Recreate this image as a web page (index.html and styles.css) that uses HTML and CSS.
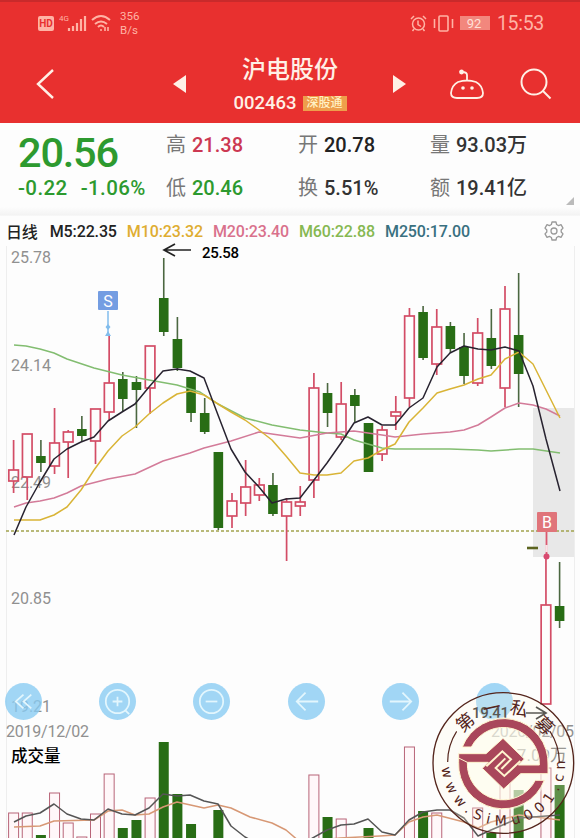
FILE: index.html
```
<!DOCTYPE html>
<html lang="zh-CN">
<head>
    <meta charset="UTF-8">
    <meta name="viewport" content="width=device-width, initial-scale=1.0">
    <title>沪电股份 002463</title>
    <link rel="stylesheet" href="styles.css">
</head>
<body>
    <header class="header">
        <div class="status-bar">
            <div class="status-left">
                <span class="hd">HD</span>
                <svg class="signal" width="29" height="20" viewBox="0 0 29 20">
                    <text x="0" y="8" font-size="8">4G</text>
                    <path d="M10 18v-3M14 18v-5M18 18v-8M22 18v-12M26 18v-15" stroke="currentColor" stroke-width="2.2"/>
                </svg>
                <svg width="20" height="18" viewBox="0 0 20 18" fill="none" stroke="currentColor" stroke-width="2">
                    <path d="M1 6q9-8 18 0M4 10q6-5 12 0M7 13q3-3 6 0"/>
                    <path d="M9 16h2M14 13v4M17 13v4" stroke-width="1.6"/>
                </svg>
                <span class="speed">356<br>B/s</span>
            </div>
            <div class="status-right">
                <svg width="17" height="17" viewBox="0 0 17 17" fill="none" stroke="currentColor" stroke-width="1.5">
                    <circle cx="8.5" cy="9" r="6"/><path d="M8 5.5v4l3 2M1 4l3-3M13 1l3 3M4 14l-1.500 2M13 14l1.500 2"/>
                </svg>
                <svg width="21" height="17" viewBox="0 0 21 17" fill="none" stroke="currentColor" stroke-width="1.6">
                    <rect x="6" y="1" width="9" height="15" rx="1"/><path d="M1.500 4v9M19.500 4v9"/>
                </svg>
                <span class="battery">92</span>
                <span class="clock">15:53</span>
            </div>
        </div>
        <nav class="nav">
            <svg class="back" width="20" height="32" viewBox="0 0 20 32" fill="none" stroke="currentColor" stroke-width="2.4">
                <path d="M18 2L3 16l15 14"/>
            </svg>
            <svg class="prev" width="13" height="18" viewBox="0 0 13 18"><path d="M0 9L13 0v18z" fill="currentColor"/></svg>
            <div class="title">
                <h1>沪电股份</h1>
                <div class="code">002463 <span class="tag">深股通</span></div>
            </div>
            <svg class="next" width="13" height="18" viewBox="0 0 13 18"><path d="M13 9L0 0v18z" fill="currentColor"/></svg>
            <svg class="robot" width="36" height="32" viewBox="0 0 36 32" fill="none" stroke="currentColor" stroke-width="1.8">
                <path d="M9 13Q18 10 27 13Q33 16 34 24Q34 29 28 29H8Q2 29 2 24Q3 16 9 13ZM18 11V6Q18 3 13 3"/>
                <circle cx="12.500" cy="3" r="1.500" fill="currentColor"/>
                <g fill="currentColor" stroke="none"><circle cx="14" cy="19" r="1.800"/><circle cx="23" cy="19" r="1.800"/></g>
            </svg>
            <svg class="search" width="32" height="32" viewBox="0 0 32 32" fill="none" stroke="currentColor" stroke-width="2">
                <circle cx="14" cy="14" r="12.500"/><path d="M22.500 22.500l8 8"/>
            </svg>
        </nav>
    </header>

    <section class="quote">
        <div class="price down">20.56</div>
        <div class="item"><label>高</label><span class="up">21.38</span></div>
        <div class="item"><label>开</label><span>20.78</span></div>
        <div class="item"><label>量</label><span class="dim">93.03万</span></div>
        <div class="change down"><span>-0.22</span><span>-1.06%</span></div>
        <div class="item"><label>低</label><span class="down">20.46</span></div>
        <div class="item"><label>换</label><span class="dim">5.51%</span></div>
        <div class="item"><label>额</label><span class="dim">19.41亿</span></div>
    </section>

    <main class="chart-area">
        <div class="legend">
            <span class="period">日线</span>
            <span class="m5">M5:22.35</span>
            <span class="m10">M10:23.32</span>
            <span class="m20">M20:23.40</span>
            <span class="m60">M60:22.88</span>
            <span class="m250">M250:17.00</span>
            <svg class="gear" width="20" height="20" viewBox="0 0 20 20" fill="none" stroke="currentColor" stroke-width="1.300" stroke-linejoin="round">
                <path d="M8 1h4l.6 2.500 2 1.100L17 3.700l2 3.400L17.200 9v2l1.800 1.900-2 3.400-2.400-.9-2 1.100L12 19H8l-.6-2.500-2-1.100-2.400.9-2-3.400L2.800 11V9L1 7.100l2-3.400 2.400.9 2-1.100z"/>
                <circle cx="10" cy="10" r="3"/>
            </svg>
        </div>

        <svg class="chart" width="580" height="598" viewBox="0 240 580 598">
            <path class="frame" d="M6.500 246V838M574.500 246V838"/>
            <rect class="gap" x="533" y="408" width="41" height="149"/>
            <g class="axis">
                <text x="11" y="263" textLength="40">25.78</text>
                <text x="11" y="371" textLength="40">24.14</text>
                <text x="11" y="488" textLength="40">22.49</text>
                <text x="11" y="604" textLength="40">20.85</text>
                <text x="11" y="712" textLength="40">19.21</text>
                <text x="6" y="737" textLength="83">2019/12/02</text>
                <text x="491" y="737" textLength="83">2020/02/05</text>
            </g>
            <text class="vol-title" x="11" y="762">成交量</text>
            <text class="vol-max" x="567" y="761" text-anchor="end">97.09万</text>
            <path class="cost" d="M6 531H574"/>
            <g id="volumes"></g>
            <g id="candles"></g>
            <g id="lines"></g>

            <path class="arrow" d="M191 250H164M175 244L164 250L175 256"/>
            <text class="peak" x="202" y="258" textLength="37">25.58</text>

            <path d="M108 311V334" stroke="#82bdec" stroke-width="1.500"/>
            <path d="M108 324l2.500 3-2.500 3-2.500-3zM108 331l3 5h-6z" fill="#82bdec"/>
            <rect x="98" y="291" width="20" height="19" rx="1" fill="#749de2"/>
            <text class="mark" x="108" y="306.500">S</text>
            <path d="M546.500 530V558" stroke="#dc5870" stroke-width="1.800"/>
            <path d="M546.500 545V552" stroke="#f8e3e7" stroke-width="2.500"/>
            <circle cx="546.500" cy="556.500" r="3" fill="#d84a70"/>
            <rect x="537" y="512" width="20" height="20" rx="1" fill="#e0747a"/>
            <text class="mark" x="547" y="527.500">B</text>
            <path d="M527 548H538" stroke="#5c6420" stroke-width="2.600"/>
        </svg>

        <div class="controls">
            <button><svg viewBox="0 0 38 38"><path d="M19 12l-8 7 8 7M27 12l-8 7 8 7"/></svg></button>
            <button><svg viewBox="0 0 38 38"><circle cx="19" cy="19" r="12"/><path d="M19 14v10M14 19h10M27 28l4 4"/></svg></button>
            <button><svg viewBox="0 0 38 38"><circle cx="19" cy="19" r="12"/><path d="M13 19h12"/></svg></button>
            <button><svg viewBox="0 0 38 38"><path d="M31 19H10M18 10l-9 9 9 9"/></svg></button>
            <button><svg viewBox="0 0 38 38"><path d="M8 19h21M21 10l9 9-9 9"/></svg></button>
            <button><svg viewBox="0 0 38 38"></svg></button>
        </div>

        <svg class="low-label" width="80" height="20" viewBox="470 703 80 20">
            <text class="peak" x="472" y="718" textLength="37">19.41</text>
            <path class="arrow" d="M526 713H546M536 707L546 713L536 719"/>
        </svg>

        <svg class="emblem" width="146" height="148" viewBox="0 0 438 444">
            <defs><path id="site" d="M35 227A185 185 0 0 0 405 227L405 180"/></defs>
            <circle cx="220" cy="225" r="211" fill="#fffbe6" fill-opacity=".25" stroke="#54251c" stroke-width="4"/>
            <circle cx="220" cy="227" r="139" fill="#fffdec" fill-opacity=".55"/>
            <path d="M53 222A170 170 0 0 1 80 130M360 130A170 170 0 0 1 388 222" fill="none" stroke="#54251c" stroke-width="3.500"/>
            <g class="ring-cn">
                <text transform="translate(106 103) rotate(-40)">第</text>
                <text transform="translate(185 60) rotate(-12)">一</text>
                <text transform="translate(268 62) rotate(14)">私</text>
                <text transform="translate(344 113) rotate(44)">募</text>
            </g>
            <text class="ring-url"><textPath href="#site" startOffset="12">www.SiMu001.cn</textPath></text>
            <g fill="#a9475b" stroke="#fff5cf" stroke-width="3">
                <path d="M97 177A133 133 0 0 1 354 231V257H272L221 303L157 241L175 223H86V197H168L219 151L283 213L265 231H328A108 108 0 0 0 124 177Z"/>
                <path d="M343 277A133 133 0 0 1 86 223V210L112 223A108 108 0 0 0 316 277Z"/>
            </g>
            <path d="M169 235L217 190L243 214L214 243M271 219L223 264L197 240L226 211" fill="none" stroke="#fff5cf" stroke-width="6"/>
        </svg>
    </main>

    <script>
        // [slot, color, high, body top, body bottom, low]
        const candles = [
            [0, 'r', 440, 470, 481, 493], [1, 'r', 434, 434, 477, 500], [2, 'g', 440, 456, 463, 472],
            [3, 'r', 408, 443, 466, 474], [4, 'r', 430, 432, 442, 478], [5, 'g', 416, 429, 436, 441],
            [6, 'r', 409, 409, 441, 464], [7, 'r', 336, 383, 412, 420], [8, 'g', 372, 379, 399, 411],
            [9, 'g', 376, 382, 390, 428], [10, 'r', 346, 346, 388, 414], [11, 'g', 258, 298, 332, 336],
            [12, 'g', 317, 339, 368, 371], [13, 'g', 377, 377, 413, 422], [14, 'g', 398, 413, 432, 434],
            [15, 'g', 452, 452, 528, 530], [16, 'r', 493, 501, 516, 528], [17, 'r', 460, 487, 503, 516],
            [18, 'r', 478, 485, 495, 501], [19, 'g', 473, 485, 514, 516], [20, 'r', 498, 502, 516, 561],
            [21, 'r', 486, 502, 506, 516], [22, 'r', 373, 388, 480, 498], [23, 'g', 383, 393, 413, 427],
            [24, 'r', 382, 404, 437, 440], [25, 'g', 389, 395, 406, 422], [26, 'g', 423, 423, 472, 472],
            [27, 'r', 426, 430, 454, 461], [28, 'r', 396, 412, 416, 430], [29, 'r', 308, 316, 398, 407],
            [30, 'g', 306, 312, 358, 360], [31, 'r', 309, 327, 364, 375], [32, 'g', 322, 326, 349, 353],
            [33, 'g', 333, 347, 376, 384], [34, 'r', 318, 333, 383, 386], [35, 'g', 309, 338, 366, 369],
            [36, 'r', 286, 309, 388, 407], [37, 'g', 273, 335, 374, 407], [39, 'r', 557, 605, 704, 704],
            [40, 'g', 562, 606, 621, 628]
        ];
        // [slot, color, bar top]
        const volumes = [
            [0, 'r', 813], [1, 'r', 813], [2, 'g', 835], [3, 'r', 793], [4, 'r', 823], [5, 'r', 837],
            [6, 'r', 814], [7, 'r', 774], [8, 'g', 828], [9, 'g', 820], [10, 'r', 798], [11, 'g', 742],
            [12, 'g', 794], [13, 'g', 824], [15, 'g', 810], [22, 'r', 775], [23, 'g', 817], [24, 'r', 819],
            [26, 'g', 828], [29, 'r', 747], [30, 'g', 811], [31, 'r', 813], [34, 'r', 808], [35, 'g', 833],
            [36, 'r', 766], [37, 'g', 790], [39, 'r', 768], [40, 'g', 785]
        ];
        const lines = {
            m60: [14,345, 26,346, 40,349, 54,353, 67,359, 94,368, 122,375, 149,380, 177,385, 200,392, 218,404, 245,418, 272,425, 300,430, 327,433, 341,434, 354,440, 368,444, 382,448, 395,449, 450,449, 478,450, 491,451, 519,449, 533,449, 560,453],
            m20: [14,507, 26,503, 40,501, 54,498, 67,493, 81,486, 108,479, 135,474, 163,461, 190,453, 204,448, 231,441, 259,432, 272,434, 300,438, 327,433, 354,431, 382,435, 395,437, 423,434, 450,432, 464,430, 478,425, 491,417, 505,408, 519,403, 533,405, 546,409, 560,416],
            m10: [14,520, 40,520, 54,515, 67,507, 81,490, 94,470, 108,451, 122,436, 135,427, 149,414, 163,403, 177,394, 190,391, 204,395, 218,404, 231,412, 245,420, 259,430, 272,440, 286,456, 300,473, 314,475, 327,475, 341,473, 354,461, 368,458, 382,450, 395,444, 409,422, 423,408, 437,393, 450,389, 464,385, 478,379, 491,375, 505,359, 519,352, 533,364, 546,390, 560,418],
            m5: [14,535, 26,507, 40,482, 54,459, 67,449, 81,442, 94,437, 108,421, 122,412, 135,404, 149,387, 163,371, 177,369, 190,371, 204,378, 218,415, 231,449, 245,472, 259,487, 272,503, 286,499, 300,498, 314,480, 327,463, 341,443, 354,423, 368,417, 382,425, 395,425, 409,408, 423,398, 437,367, 450,353, 464,346, 478,349, 491,350, 505,347, 519,351, 533,386, 546,439, 560,491],
            v10: [14,827, 40,826, 54,821, 94,820, 108,811, 122,810, 135,815, 149,814, 163,807, 177,802, 204,808, 218,805, 231,808, 250,817, 272,823, 286,830, 300,842, 340,838, 380,836, 395,835, 409,822, 423,817, 437,815, 464,822, 478,828, 491,822, 519,815, 560,820],
            v5: [14,822, 26,816, 40,813, 54,804, 67,814, 81,819, 94,820, 108,809, 122,814, 135,815, 149,808, 163,794, 177,796, 190,795, 204,801, 218,804, 231,826, 245,837, 260,845, 300,845, 327,830, 341,825, 354,824, 368,819, 382,832, 395,835, 409,820, 423,812, 437,810, 450,810, 464,818, 478,836, 491,830, 505,824, 519,818, 560,815]
        };

        const slotX = i => 13.6 + i * 13.65;

        document.getElementById('candles').innerHTML = candles.map(([i, color, high, top, bottom, low]) => {
            const x = slotX(i);
            return `<g class="candle-${color}">
                <path d="M${x} ${high}V${top}M${x} ${bottom}V${low}"/>
                <rect x="${x - 4.8}" y="${top}" width="9.600" height="${bottom - top}"/>
            </g>`;
        }).join('');

        document.getElementById('volumes').innerHTML = volumes.map(([i, color, top]) =>
            `<rect class="vol-${color}" x="${slotX(i) - 5}" y="${top}" width="10" height="${845 - top}"/>`
        ).join('');

        document.getElementById('lines').innerHTML = Object.keys(lines).map(name =>
            `<polyline class="line-${name}" points="${lines[name].join(' ')}"/>`
        ).join('');
    </script>
</body>
</html>
```
FILE: styles.css
```
body {
    margin: 0;
    width: 580px;
    height: 838px;
    overflow: hidden;
    background-color: #fdfdfd;
    font-family: Roboto, "Noto Sans CJK SC", sans-serif;
    color: #222;
}
.header {
    height: 123px;
    box-sizing: border-box;
    border-top: 2px solid #c92a2b;
    background-color: #e8302f;
    color: #fff0e6;
}
.status-bar {
    display: flex;
    justify-content: space-between;
    height: 42px;
    padding: 0 36px 0 38px;
    color: #ffb3a5;
}
.status-left, .status-right {
    display: flex;
    align-items: center;
}
.hd {
    width: 16px;
    height: 15px;
    border-radius: 2px;
    background-color: #ffb3a5;
    color: #e8302f;
    font-size: 10px;
    font-weight: bold;
    line-height: 15px;
    text-align: center;
}
.signal {
    margin: 0 3px 0 5px;
    fill: currentColor;
}
.speed {
    margin-left: 9px;
    font-size: 11.5px;
    line-height: 14px;
}
.status-right svg {
    margin-right: 6px;
}
.battery {
    width: 28px;
    height: 14px;
    margin-right: 7px;
    border-right: 2px solid #f2877d;
    background-color: #f2877d;
    background-clip: content-box;
    color: #ffe0d8;
    font-size: 13px;
    line-height: 15px;
    text-align: center;
}
.clock {
    font-size: 19.5px;
    letter-spacing: -0.3px;
}
.nav {
    display: flex;
    align-items: center;
    height: 79px;
}
.back {
    margin-left: 35px;
}
.prev {
    margin-left: 118px;
}
.title {
    width: 132px;
    margin: 5px 37px 0 38px;
    text-align: center;
}
.title h1 {
    margin: 0;
    font-size: 24px;
    font-weight: 500;
    line-height: 34px;
    white-space: nowrap;
}
.code {
    display: flex;
    justify-content: center;
    align-items: center;
    gap: 6px;
    font-size: 18.5px;
    font-weight: 500;
    line-height: 32px;
}
.tag {
    width: 44px;
    height: 15px;
    background-color: #ee9e4b;
    color: #fff1c4;
    font-size: 12px;
    line-height: 15px;
}
.robot {
    margin: 3px 0 0 43px;
}
.search {
    margin-left: 35px;
}
.quote {
    position: relative;
    display: grid;
    grid-template-columns: 148px 132px 132px 1fr;
    grid-template-rows: 43px 44px;
    align-items: center;
    height: 93px;
    box-sizing: border-box;
    padding-left: 18px;
    background: linear-gradient(#fdfdfd 84px, #f3f3f3 92px, #fafafa 93px);
}
/* expand handle in the corner */
.quote::after {
    content: "";
    position: absolute;
    right: 6px;
    bottom: 11px;
    border-left: 8px solid transparent;
    border-bottom: 8px solid #bbb;
}
.price {
    padding-top: 17px;
    font-size: 41.5px;
    font-weight: 500;
    letter-spacing: -1.2px;
    line-height: 44px;
}
.change {
    display: flex;
    gap: 13px;
    font-size: 20.5px;
    font-weight: 500;
    letter-spacing: 0.4px;
    white-space: nowrap;
}
.item {
    display: flex;
    align-items: center;
    gap: 6px;
    font-size: 20px;
    font-weight: 500;
    line-height: 28px;
    white-space: nowrap;
}
.item label {
    color: #777;
    font-weight: 400;
}
.down {
    color: #2d9a2f;
}
.up {
    color: #cc3852;
}
.dim {
    color: #333;
}
.chart-area {
    position: relative;
}
.legend {
    display: flex;
    align-items: center;
    height: 30px;
    padding: 0 16px 0 6px;
    font-size: 16px;
    font-weight: 500;
    letter-spacing: -0.13px;
    white-space: nowrap;
}
.legend span {
    margin-right: 10px;
}
.legend .period {
    margin-right: 12px;
}
.legend .m5 {
    color: #222;
}
.legend .m10 {
    color: #dfad31;
}
.legend .m20 {
    color: #d9718c;
}
.legend .m60 {
    color: #86b851;
}
.legend .m250 {
    color: #397080;
}
.gear {
    margin-left: auto;
    color: #999;
}
.chart {
    display: block;
    margin-top: -6px;
}
.frame {
    stroke: #eee;
    fill: none;
}
.gap {
    fill: #e8e8e8;
}
.axis {
    fill: #909090;
    font-size: 16px;
}
.vol-title {
    font-size: 16.5px;
    font-weight: 500;
}
.vol-max {
    fill: #777;
    font-size: 17px;
}
.cost {
    stroke: #a1a34e;
    stroke-width: 1.4;
    stroke-dasharray: 3 2;
}
.peak {
    font-size: 15px;
    font-weight: 500;
}
.arrow {
    fill: none;
    stroke: #222;
    stroke-width: 1.7;
}
.mark {
    fill: #fff;
    font-size: 16px;
    text-anchor: middle;
}
.candle-r path, .candle-r rect {
    fill: none;
    stroke: #d34d66;
    stroke-width: 1.7;
}
.candle-g path {
    stroke: #4b6740;
    stroke-width: 1.6;
}
.candle-g rect {
    fill: #286d15;
}
.vol-r {
    fill: #fff7f9;
    stroke: #b86478;
    stroke-width: 1;
}
.vol-g {
    fill: #286d15;
}
polyline {
    fill: none;
    stroke-width: 1.5;
    stroke-linejoin: round;
}
.line-m5 {
    stroke: #282330;
}
.line-m10 {
    stroke: #d9b436;
}
.line-m20 {
    stroke: #d37b99;
}
.line-m60 {
    stroke: #82bd70;
}
.line-v5 {
    stroke: #555;
}
.line-v10 {
    stroke: #d79875;
}
.controls {
    position: absolute;
    top: 467px;
    left: 5px;
    display: flex;
    gap: 57.2px;
}
.controls button {
    width: 37px;
    height: 37px;
    padding: 0;
    border: none;
    border-radius: 50%;
    background-color: rgba(135, 203, 242, 0.78);
}
.controls svg {
    display: block;
    fill: none;
    stroke: #e3f6fd;
    stroke-width: 1.8;
}
.low-label {
    position: absolute;
    left: 470px;
    top: 487px;
    fill: #222;
}
.emblem {
    position: absolute;
    left: 430px;
    top: 472px;
}
.ring-cn {
    fill: #54251c;
    font-size: 54px;
    text-anchor: middle;
}
.ring-cn text {
    dominant-baseline: central;
}
.ring-url {
    fill: #54251c;
    font-family: "DejaVu Sans", sans-serif;
    font-size: 42px;
    letter-spacing: 17px;
}
```
